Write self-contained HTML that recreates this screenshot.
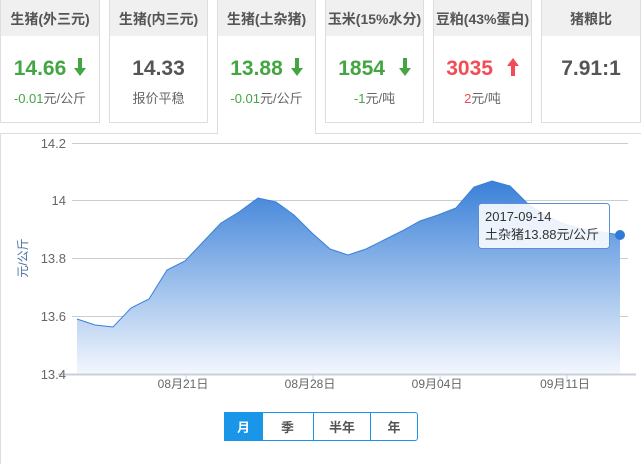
<!DOCTYPE html><html><head><meta charset="utf-8"><style>
body{margin:0;width:641px;height:450px;background:#fff;font-family:"Liberation Sans","Noto Sans CJK SC",sans-serif;position:relative;overflow:hidden}
.c{position:absolute;top:0;height:123px;border:1px solid #ddd;border-top:none;box-sizing:border-box;text-align:center;background:#fff}
.h{background:#f0f0f0;height:36px;line-height:38px;font-size:14px;color:#555;font-weight:bold}
.v{margin-top:20px;font-size:21px;font-weight:bold;height:26px;line-height:26px}
.s{font-size:13px;color:#666;margin-top:6px}
.g{color:#43a643}.r{color:#f24c55}.k{color:#555}
.ar{margin-left:8px;vertical-align:-1px}
.box{position:absolute;left:0;top:133px;width:640px;height:330px;border-top:1px solid #ddd;border-left:1px solid #ddd}
.btn{position:absolute;top:412px;height:29px;line-height:29px;font-size:13px;text-align:center;color:#555;border:1px solid #1a96e8;box-sizing:border-box;font-weight:bold}
</style></head><body>
<div class="box"></div>
<div class="c" style="left:0;width:100px"><div class="h">生猪(外三元)</div><div class="v g">14.66<svg class="ar" width="12" height="18" viewBox="0 0 12 18"><rect x="4" y="0" width="4" height="11" fill="#43a643"/><path d="M0,10 L12,10 L6,18Z" fill="#43a643"/></svg></div><div class="s"><span class="g">-0.01</span>元/公斤</div></div>
<div class="c" style="left:109px;width:99px"><div class="h">生猪(内三元)</div><div class="v k">14.33</div><div class="s">报价平稳</div></div>
<div class="c" style="left:217px;width:99px;height:134px;border-bottom:none"><div class="h">生猪(土杂猪)</div><div class="v g">13.88<svg class="ar" width="12" height="18" viewBox="0 0 12 18"><rect x="4" y="0" width="4" height="11" fill="#43a643"/><path d="M0,10 L12,10 L6,18Z" fill="#43a643"/></svg></div><div class="s"><span class="g">-0.01</span>元/公斤</div></div>
<div class="c" style="left:325px;width:99px"><div class="h">玉米(15%水分)</div><div class="v g">1854 <svg class="ar" width="12" height="18" viewBox="0 0 12 18"><rect x="4" y="0" width="4" height="11" fill="#43a643"/><path d="M0,10 L12,10 L6,18Z" fill="#43a643"/></svg></div><div class="s"><span class="g">-1</span>元/吨</div></div>
<div class="c" style="left:433px;width:99px"><div class="h">豆粕(43%蛋白)</div><div class="v r">3035 <svg class="ar" width="12" height="18" viewBox="0 0 12 18"><rect x="4" y="7" width="4" height="11" fill="#f24c55"/><path d="M0,8 L12,8 L6,0Z" fill="#f24c55"/></svg></div><div class="s"><span class="r">2</span>元/吨</div></div>
<div class="c" style="left:541px;width:100px"><div class="h">猪粮比</div><div class="v k">7.91:1</div></div>
<svg width="641" height="450" style="position:absolute;left:0;top:0" font-family="Liberation Sans,Noto Sans CJK SC,sans-serif">
<defs><linearGradient id="gr" x1="0" y1="0" x2="0" y2="1"><stop offset="0" stop-color="#3a80d8"/><stop offset="1" stop-color="#f3f7fd"/></linearGradient></defs>
<g stroke="#ccc" stroke-width="1"><line x1="72" y1="143.5" x2="628" y2="143.5"/><line x1="72" y1="200.5" x2="628" y2="200.5"/><line x1="72" y1="258.5" x2="628" y2="258.5"/><line x1="72" y1="316.5" x2="628" y2="316.5"/></g>
<path d="M77,319 L95,325 L113,327 L131,308 L149,299 L167,270 L185,261 L203,242 L221,223 L239,212 L258,198 L276,202 L294,215 L312,233 L330,249 L348,255 L366,249 L384,240 L402,231 L420,221 L438,215 L456,208 L474,187 L492,181 L510,186 L528,204 L546,216 L564,224 L582,229 L601,232 L620,235 L620,374 L77,374Z" fill="url(#gr)"/>
<path d="M77,319 L95,325 L113,327 L131,308 L149,299 L167,270 L185,261 L203,242 L221,223 L239,212 L258,198 L276,202 L294,215 L312,233 L330,249 L348,255 L366,249 L384,240 L402,231 L420,221 L438,215 L456,208 L474,187 L492,181 L510,186 L528,204 L546,216 L564,224 L582,229 L601,232 L620,235" fill="none" stroke="#3a80d8" stroke-width="1"/>
<line x1="58" y1="374.5" x2="636" y2="374.5" stroke="#c8d0dc" stroke-width="2"/>
<g stroke="#c8d0dc"><line x1="186" y1="375" x2="186" y2="381"/><line x1="313" y1="375" x2="313" y2="381"/><line x1="440" y1="375" x2="440" y2="381"/><line x1="567" y1="375" x2="567" y2="381"/></g>
<g font-size="13" fill="#666" text-anchor="end"><text x="66" y="148">14.2</text><text x="66" y="205">14</text><text x="66" y="263">13.8</text><text x="66" y="321">13.6</text><text x="66" y="379">13.4</text></g>
<g font-size="12" fill="#666" text-anchor="middle"><text x="183" y="388">08月21日</text><text x="310" y="388">08月28日</text><text x="437" y="388">09月04日</text><text x="565" y="388">09月11日</text></g>
<text transform="translate(27,258) rotate(-90)" font-size="12" fill="#4a6fa0" text-anchor="middle">元/公斤</text>
<circle cx="620" cy="235" r="5" fill="#2f7ad6"/>
<rect x="478.5" y="203.5" width="131" height="45" rx="3" fill="rgba(255,255,255,0.88)" stroke="#5b8ed6"/>
<text x="485" y="221" font-size="13" fill="#333">2017-09-14</text>
<text x="485" y="239" font-size="13" fill="#333">土杂猪13.88元/公斤</text>
</svg>
<div class="btn" style="left:224px;width:39px;background:#1a96e8;color:#fff">月</div>
<div class="btn" style="left:262px;width:52px;border-left:none">季</div>
<div class="btn" style="left:313px;width:58px">半年</div>
<div class="btn" style="left:370px;width:48px;border-radius:0 3px 3px 0">年</div>
</body></html>
